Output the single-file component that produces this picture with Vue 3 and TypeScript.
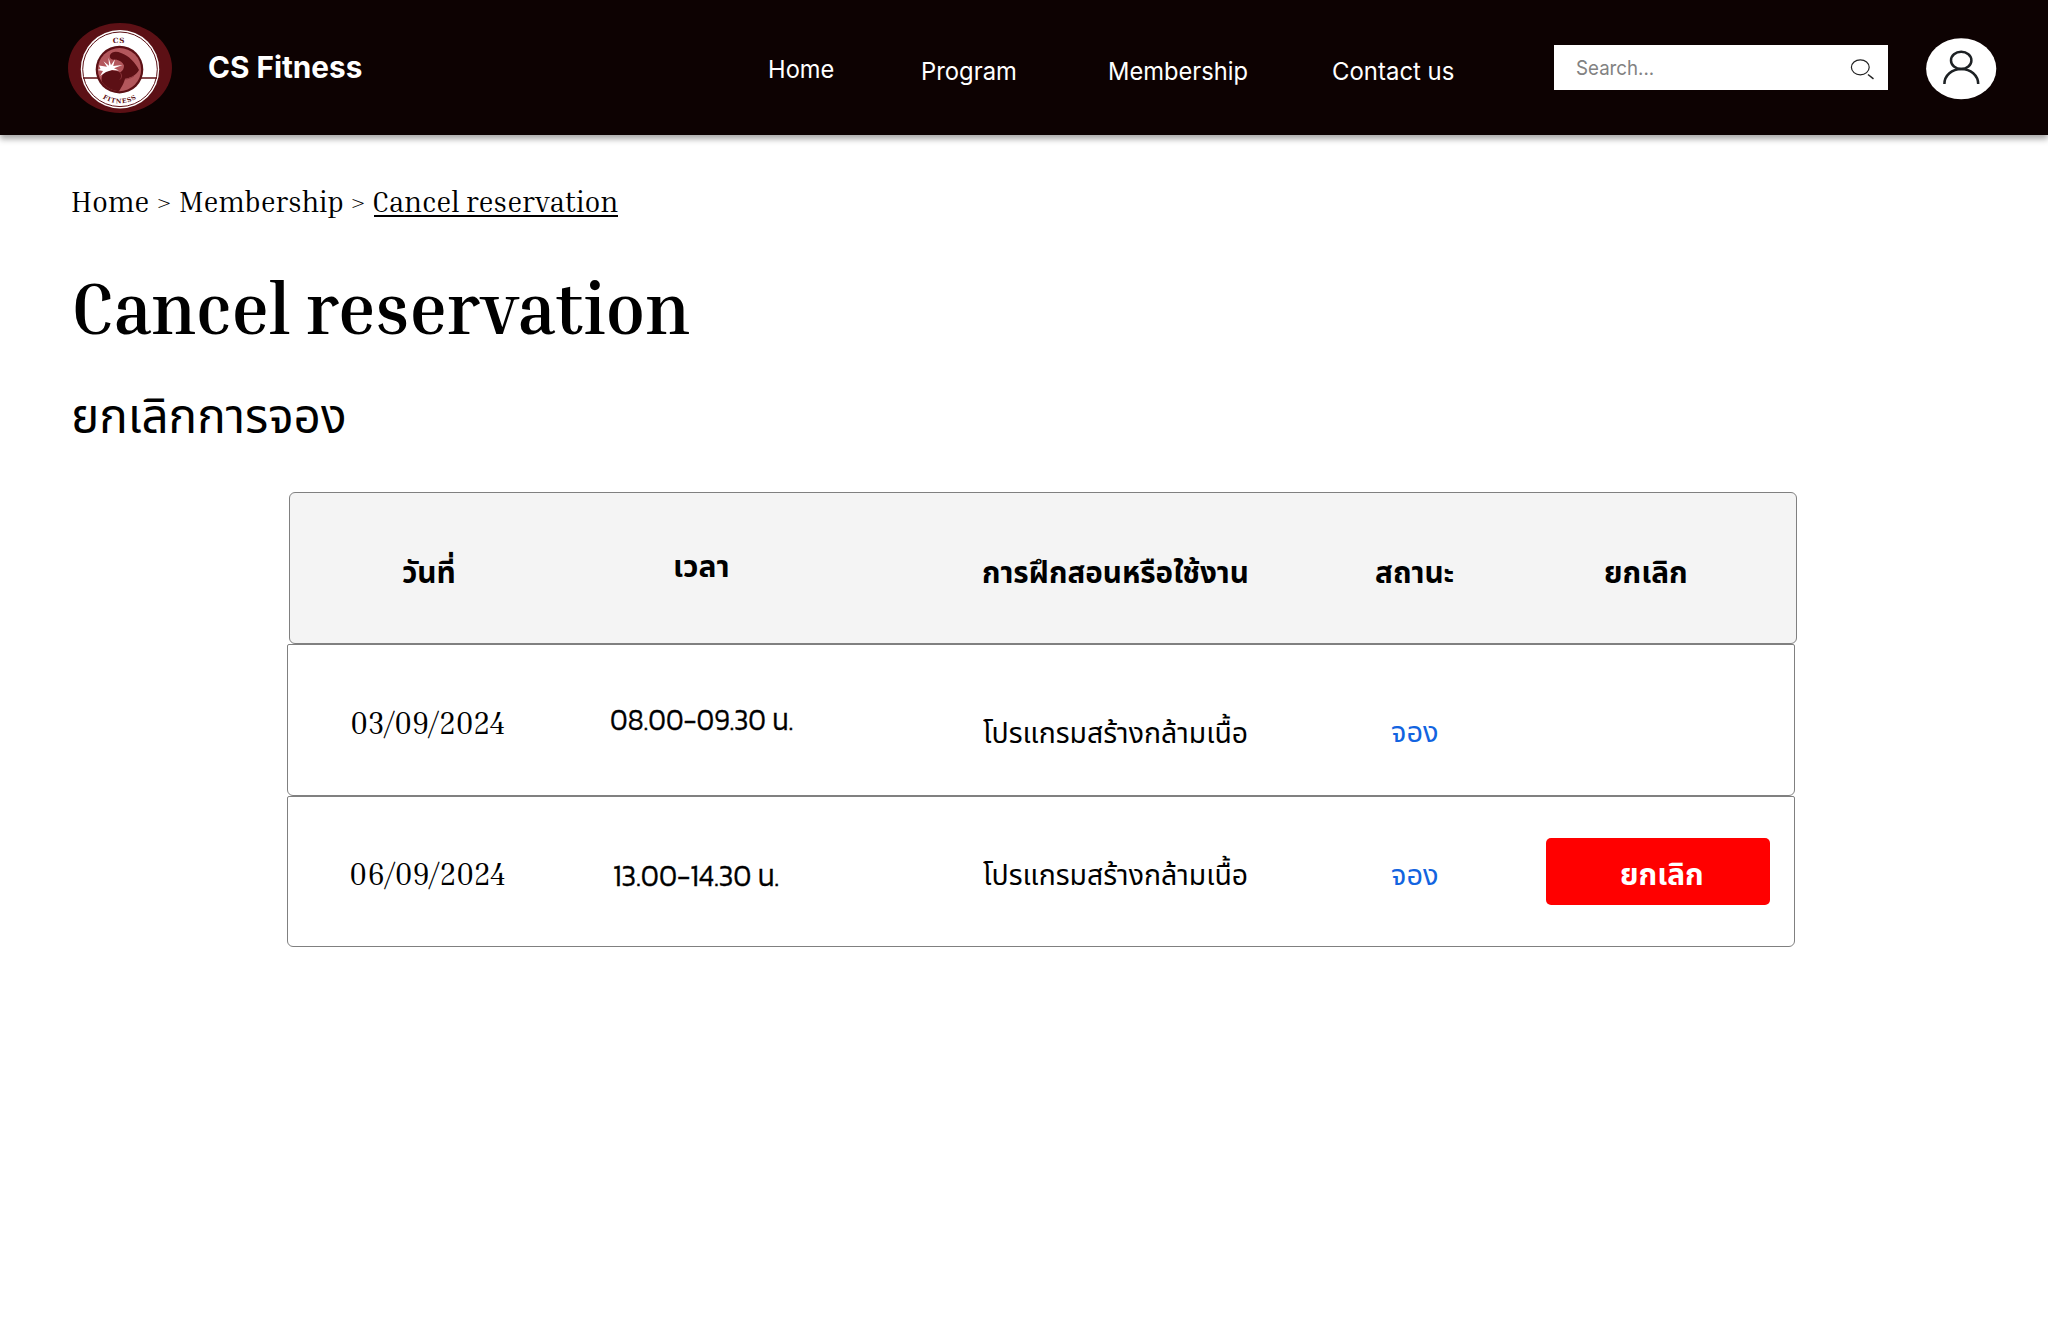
<script setup lang="ts">
import type { Directive } from 'vue'

interface Cell {
  text: string
  width: number
  kind: 'head' | 'date' | 'time' | 'program' | 'status' | 'cancel'
  top: number
}

// Stretches a line of text so that its visible glyphs fill the given width.
const vFit: Directive<HTMLElement, number> = {
  mounted(el, { value }) {
    const ctx = document.createElement('canvas').getContext('2d')
    if (!ctx) return
    const style = getComputedStyle(el)
    ctx.font = `${style.fontWeight} ${style.fontSize} ${style.fontFamily}`
    const m = ctx.measureText((el.textContent ?? '').trim())
    const scale = value / (m.actualBoundingBoxLeft + m.actualBoundingBoxRight)
    el.style.width = `${value}px`
    el.style.transform = `translateX(${m.actualBoundingBoxLeft * scale}px) scaleX(${scale})`
  },
}

const nav = [
  { label: 'Home', width: 64, top: 48, gap: 0 },
  { label: 'Program', width: 92.5, top: 49.5, gap: 89.5 },
  { label: 'Membership', width: 137, top: 49.5, gap: 94 },
  { label: 'Contact us', width: 120.5, top: 49.5, gap: 86 },
]

const heads: Cell[] = [
  { text: 'วันที่', width: 51.5, kind: 'head', top: 59.5 },
  { text: 'เวลา', width: 52.5, kind: 'head', top: 53.5 },
  { text: 'การฝึกสอนหรือใช้งาน', width: 264.5, kind: 'head', top: 59.5 },
  { text: 'สถานะ', width: 77.5, kind: 'head', top: 59.5 },
  { text: 'ยกเลิก', width: 81, kind: 'head', top: 59.5 },
]

const rows: Cell[][] = [
  [
    { text: '03/09/2024', width: 152, kind: 'date', top: 58.5 },
    { text: '08.00-09.30 น.', width: 181, kind: 'time', top: 54.5 },
    { text: 'โปรแกรมสร้างกล้ามเนื้อ', width: 263.5, kind: 'program', top: 68 },
    { text: 'จอง', width: 45, kind: 'status', top: 67 },
  ],
  [
    { text: '06/09/2024', width: 153.5, kind: 'date', top: 58 },
    { text: '13.00-14.30 น.', width: 164, kind: 'time', top: 59.5 },
    { text: 'โปรแกรมสร้างกล้ามเนื้อ', width: 263.5, kind: 'program', top: 58.5 },
    { text: 'จอง', width: 45, kind: 'status', top: 58.5 },
    { text: 'ยกเลิก', width: 81, kind: 'cancel', top: 0 },
  ],
]
</script>

<template>
  <div class="page">
    <header class="bar">
      <svg class="logo" viewBox="0 0 104 92" width="104" height="92" aria-label="CS Fitness logo">
        <defs>
          <path id="logo-arc" d="M 20.5 50 A 31.3 31.3 0 0 0 83.1 50" />
          <clipPath id="logo-disc"><circle cx="51.5" cy="47.6" r="21.6" /></clipPath>
        </defs>
        <ellipse cx="52" cy="46" rx="52" ry="45" fill="#5c1015" />
        <circle cx="52" cy="47.3" r="39.2" fill="#fff" />
        <circle cx="52" cy="47.3" r="37.3" fill="none" stroke="#5c1015" stroke-width="1" />
        <path d="M15 56H89" stroke="#5c1015" stroke-width="1.3" />
        <circle cx="51.5" cy="47.6" r="23.8" fill="#5c1015" />
        <circle cx="51.5" cy="47.6" r="21.6" fill="#b3575c" />
        <g clip-path="url(#logo-disc)">
          <path
            d="M42 33c2-4 7-4 11-2 8 3 14 9 18 17-3 6-10 8-14 9-2 7-5 10-7 14H38C33 64 32 55 36 50.500c4-3 12-3 16 0 3-2 4-4 4-7-1-3-4-5-8-6-4 1-7-1-6-4.500z"
            fill="#5c1015"
          />
          <path d="M52 50.500c2 2 2 5 0 7M57 57c3 0 6-1 9-3" fill="none" stroke="#8f3a40" stroke-width=".9" />
          <path d="M31 43.500l8 1.200-3.500-5.500 5.500 4.500-.5-8 2.500 7.500 4-6-1.800 6.800 9.300-1-8.500 3.200 5 2.200-7-.4-6 2-6 4 3-5-5.500-1 3-1z" fill="#fff" />
        </g>
        <text x="51" y="21" text-anchor="middle" class="logo-text">CS</text>
        <text class="logo-text small"><textPath href="#logo-arc" startOffset="50%" text-anchor="middle">FITNESS</textPath></text>
      </svg>
      <div v-fit="152.5" class="fit brand">CS Fitness</div>
      <nav class="nav">
        <a
          v-for="n in nav"
          :key="n.label"
          v-fit="n.width"
          class="fit"
          :style="{ marginTop: n.top + 'px', marginLeft: n.gap + 'px' }"
        >{{ n.label }}</a>
      </nav>
      <div class="search">
        <span v-fit="76.5" class="fit placeholder">Search...</span>
        <svg width="26" height="24" viewBox="0 0 26 24" fill="none" stroke="#222" stroke-width="1.2">
          <ellipse cx="11.3" cy="10.3" rx="8.9" ry="7.5" />
          <path d="M19 17.5L24.5 21.8" stroke-width="1.5" />
        </svg>
      </div>
      <svg class="avatar" width="71" height="62" viewBox="0 0 71 62" fill="none" stroke="#1d2124" stroke-width="2.5">
        <ellipse cx="35.2" cy="30.8" rx="35.1" ry="30.5" fill="#fff" stroke="none" />
        <ellipse cx="35.2" cy="22.4" rx="10.2" ry="8.6" />
        <path d="M18.4 46C18.4 37.5 26 31 35.3 31S52.2 37.5 52.2 46" />
      </svg>
    </header>

    <main>
      <div class="crumbs">
        <a v-fit="76" class="fit">Home</a>
        <span v-fit="12.5" class="fit gt">&gt;</span>
        <a v-fit="163" class="fit">Membership</a>
        <span v-fit="12.5" class="fit gt">&gt;</span>
        <div class="current"><a v-fit="244" class="fit">Cancel reservation</a></div>
      </div>
      <h1 v-fit="614.5" class="fit title">Cancel reservation</h1>
      <h2 v-fit="270" class="fit subtitle">ยกเลิกการจอง</h2>

      <section class="table">
        <div class="row headrow">
          <div v-for="c in heads" :key="c.text" class="cell">
            <span v-fit="c.width" class="fit head" :style="{ marginTop: c.top + 'px' }">{{ c.text }}</span>
          </div>
        </div>
        <div v-for="(row, i) in rows" :key="i" class="row">
          <div v-for="c in row" :key="c.kind" class="cell" :class="{ early: c.kind === 'time' && i === 1 }">
            <button v-if="c.kind === 'cancel'" class="cancel">
              <span v-fit="c.width" class="fit head">{{ c.text }}</span>
            </button>
            <span v-else v-fit="c.width" class="fit" :class="c.kind" :style="{ marginTop: c.top + 'px' }">{{ c.text }}</span>
          </div>
        </div>
      </section>
    </main>
  </div>
</template>

<style>
body {
  background: #fff;
}
</style>

<style scoped>
.page {
  height: 1321px;
  overflow: hidden;
  background: #fff;
  color: #000;
  font-family: 'Noto Sans Thai', 'Noto Sans', sans-serif;
}
/* The strut puts the text baseline exactly at the bottom edge of the box. */
.fit {
  display: block;
  flex: none;
  height: 30px;
  line-height: 0;
  white-space: nowrap;
  transform-origin: 0 0;
}
.fit::before {
  content: '';
  display: inline-block;
  height: 30px;
}
.bar {
  display: flex;
  align-items: flex-start;
  height: 135px;
  background: #0d0202;
  box-shadow: 0 4px 6px rgba(0, 0, 0, 0.35);
  color: #fff;
  font-family: Inter, sans-serif;
}
.logo {
  flex: none;
  margin: 22px 0 0 68px;
}
.logo-text {
  font: 700 7.2px 'DejaVu Serif', serif;
  letter-spacing: 0.9px;
  fill: #5c1015;
}
.small {
  font-size: 6.2px;
  letter-spacing: 0.8px;
}
.brand {
  margin: 47.5px 0 0 37px;
  font-size: 30px;
  font-weight: 700;
}
.nav {
  display: flex;
  align-items: flex-start;
  width: 683.5px;
  margin-left: 408px;
  font-size: 24.5px;
}
.search {
  display: flex;
  align-items: flex-start;
  justify-content: space-between;
  box-sizing: border-box;
  flex: none;
  width: 333.5px;
  height: 45px;
  margin: 45px 0 0 101px;
  padding: 0 13px 0 22.5px;
  background: #fff;
}
.search svg {
  margin-top: 12px;
}
.placeholder {
  margin-top: -0.5px;
  color: #828282;
  font-size: 20px;
}
.avatar {
  flex: none;
  margin: 38px 0 0 38px;
}
main {
  padding: 47px 0 0 72px;
}
.crumbs {
  display: flex;
  align-items: flex-start;
  gap: 9.5px;
  height: 40px;
  font-family: 'Inria Serif', 'Liberation Serif', serif;
  font-size: 29.5px;
}
.gt {
  font-size: 26px;
}
.current {
  padding-bottom: 3px;
  border-bottom: 2px solid #000;
}
.title {
  margin: 81.5px 0 0 3px;
  font-family: 'Inria Serif', 'Liberation Serif', serif;
  font-size: 72.5px;
  font-weight: 700;
}
.subtitle {
  margin: 69px 0 0 2px;
  font-size: 47.5px;
  font-weight: 400;
}
.table {
  width: 1508px;
  margin: 59.5px 0 0 215px;
}
.row {
  display: grid;
  grid-template-columns: 279px 269px 457px 242px 1fr;
  box-sizing: border-box;
  width: 1507.5px;
  height: 151.5px;
  border: 1.5px solid #808080;
  border-radius: 2px 2px 6px 6px;
}
.headrow {
  grid-template-columns: 277px 269px 458px 242px 1fr;
  position: relative;
  left: 2px;
  height: 152px;
  background: #f4f4f4;
  border-radius: 6px;
}
.cell {
  display: flex;
  align-items: flex-start;
  justify-content: center;
}
.cell:nth-child(3) {
  padding-left: 100px;
}
.headrow .cell:nth-child(5) {
  padding-right: 41px;
}
.row:not(.headrow) .cell:nth-child(5) {
  padding-right: 13px;
}
.early {
  padding-right: 11px;
}
.head {
  font-size: 30px;
  font-weight: 700;
}
.date {
  font-family: 'Inria Serif', 'Liberation Serif', serif;
  font-size: 31.5px;
}
.program,
.status {
  font-size: 29px;
}
.time {
  font-family: Kanit, 'Noto Sans Thai', sans-serif;
  font-size: 30.5px;
  font-weight: 300;
  -webkit-text-stroke: 0.4px #000;
}
.status {
  color: #1264e0;
}
.cancel {
  display: flex;
  align-items: flex-start;
  justify-content: center;
  box-sizing: border-box;
  width: 224px;
  height: 67px;
  margin-top: 41px;
  padding: 17px 0 0 8px;
  border: 0;
  border-radius: 5px;
  background: #f00;
  color: #fff;
  font-family: inherit;
}
</style>
